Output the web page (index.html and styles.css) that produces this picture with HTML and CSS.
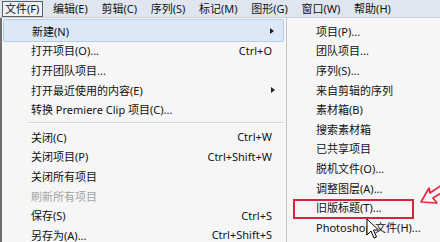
FILE: index.html
```html
<!DOCTYPE html>
<html lang="zh-CN">
<head>
<meta charset="utf-8">
<title>Premiere 文件菜单</title>
<link rel="stylesheet" href="styles.css">
</head>
<body>
<div class="screen">
  <div class="menubar">
    <span class="mb-item open">文件(F)</span>
    <span class="mb-item">编辑(E)</span>
    <span class="mb-item">剪辑(C)</span>
    <span class="mb-item">序列(S)</span>
    <span class="mb-item">标记(M)</span>
    <span class="mb-item">图形(G)</span>
    <span class="mb-item">窗口(W)</span>
    <span class="mb-item">帮助(H)</span>
  </div>
  <div class="menus">
    <div class="menu main">
      <div class="row active"><span class="label">新建(N)</span><span class="sub-arrow"></span></div>
      <div class="row"><span class="label">打开项目(O)...</span><span class="key">Ctrl+O</span></div>
      <div class="row"><span class="label">打开团队项目...</span></div>
      <div class="row"><span class="label">打开最近使用的内容(E)</span><span class="sub-arrow"></span></div>
      <div class="row"><span class="label">转换 Premiere Clip 项目(C)...</span></div>
      <div class="sep"></div>
      <div class="row"><span class="label">关闭(C)</span><span class="key">Ctrl+W</span></div>
      <div class="row"><span class="label">关闭项目(P)</span><span class="key">Ctrl+Shift+W</span></div>
      <div class="row"><span class="label">关闭所有项目</span></div>
      <div class="row disabled"><span class="label">刷新所有项目</span></div>
      <div class="row"><span class="label">保存(S)</span><span class="key">Ctrl+S</span></div>
      <div class="row"><span class="label">另存为(A)...</span><span class="key">Ctrl+Shift+S</span></div>
    </div>
    <div class="menu submenu">
      <div class="row"><span class="label">项目(P)...</span></div>
      <div class="row"><span class="label">团队项目...</span></div>
      <div class="row"><span class="label">序列(S)...</span></div>
      <div class="row"><span class="label">来自剪辑的序列</span></div>
      <div class="row"><span class="label">素材箱(B)</span></div>
      <div class="row"><span class="label">搜索素材箱</span></div>
      <div class="row"><span class="label">已共享项目</span></div>
      <div class="row"><span class="label">脱机文件(O)...</span></div>
      <div class="row"><span class="label">调整图层(A)...</span></div>
      <div class="row"><span class="label">旧版标题(T)...</span></div>
      <div class="row"><span class="label">Photoshop 文件(H)...</span></div>
    </div>
  </div>
  <div class="mark-box"></div>
  <svg class="mark-arrow" width="24" height="24" viewBox="0 0 24 24">
    <polygon points="1,18 9,4 10,9 22,1 23,8 13,14 17,19" fill="none" stroke="#e0283c" stroke-width="1.6" stroke-linejoin="round"/>
  </svg>
  <svg class="cursor" width="14" height="22" viewBox="0 0 14 22">
    <polygon points="1,1 1,17 5,13 8,20 10.5,19 7.5,12 12.5,12" fill="#ffffff" stroke="#000000" stroke-width="1" stroke-linejoin="miter"/>
  </svg>
</div>
</body>
</html>
```

FILE: styles.css
```css
* { box-sizing: border-box; }
html, body {
  margin: 0;
  padding: 0;
}
body {
  width: 440px;
  height: 242px;
  overflow: hidden;
  background: #f6f6f6;
  font-family: "Noto Sans", "Noto Sans CJK SC", sans-serif;
  font-size: 11px;
  color: #111;
}
.screen {
  position: relative;
  width: 440px;
  height: 242px;
  overflow: hidden;
}
.menubar {
  display: flex;
  align-items: center;
  height: 18px;
  padding-left: 2px;
  background: #dfe6ef;
  border-bottom: 1px solid #c9d0da;
}
.mb-item {
  height: 16px;
  line-height: 14px;
  padding: 0 3px 0 2px;
  margin-right: 6.7px;
  border: 1px solid transparent;
  white-space: nowrap;
}
.mb-item.open {
  border-color: #5b6068;
  background: #eef1f5;
}
.menus {
  display: flex;
  height: 224px;
}
.menu {
  padding-top: 3px;
}
.main {
  width: 287px;
  border-left: 2px solid #6e6e6e;
  border-right: 1px solid #c4c4c4;
  background: #f6f6f6;
  padding-left: 1px;
  padding-right: 2px;
}
.submenu {
  flex: 1;
  background: #f6f6f6;
  padding-left: 3px;
}
.row {
  display: flex;
  align-items: center;
  height: 19.6px;
  white-space: nowrap;
}
.main .row {
  padding-left: 28px;
  padding-right: 12px;
}
.submenu .row {
  padding-left: 26px;
}
.row .label { flex: 1; }
.row .key { text-align: right; }
.row.active {
  background: #dce8f6;
  border: 1px solid #b2cdee;
  border-radius: 2px;
  height: 23px;
  margin-top: -2px;
  margin-bottom: -1.4px;
}
.row.disabled { color: #a3a3a3; }
.sub-arrow {
  width: 0;
  height: 0;
  border-top: 3.5px solid transparent;
  border-bottom: 3.5px solid transparent;
  border-left: 4px solid #222;
  margin-right: -3px;
}
.sep {
  height: 8px;
  margin-left: 25px;
  display: flex;
  align-items: center;
}
.sep::before {
  content: "";
  display: block;
  width: 100%;
  border-top: 1px solid #d4d4d4;
  border-bottom: 1px solid #ffffff;
}
.mark-box {
  position: absolute;
  left: 293px;
  top: 199px;
  width: 121px;
  height: 20px;
  border: 2.5px solid #d9223c;
}
.mark-arrow {
  position: absolute;
  left: 420px;
  top: 184px;
}
.cursor {
  position: absolute;
  left: 366px;
  top: 218px;
}
```
